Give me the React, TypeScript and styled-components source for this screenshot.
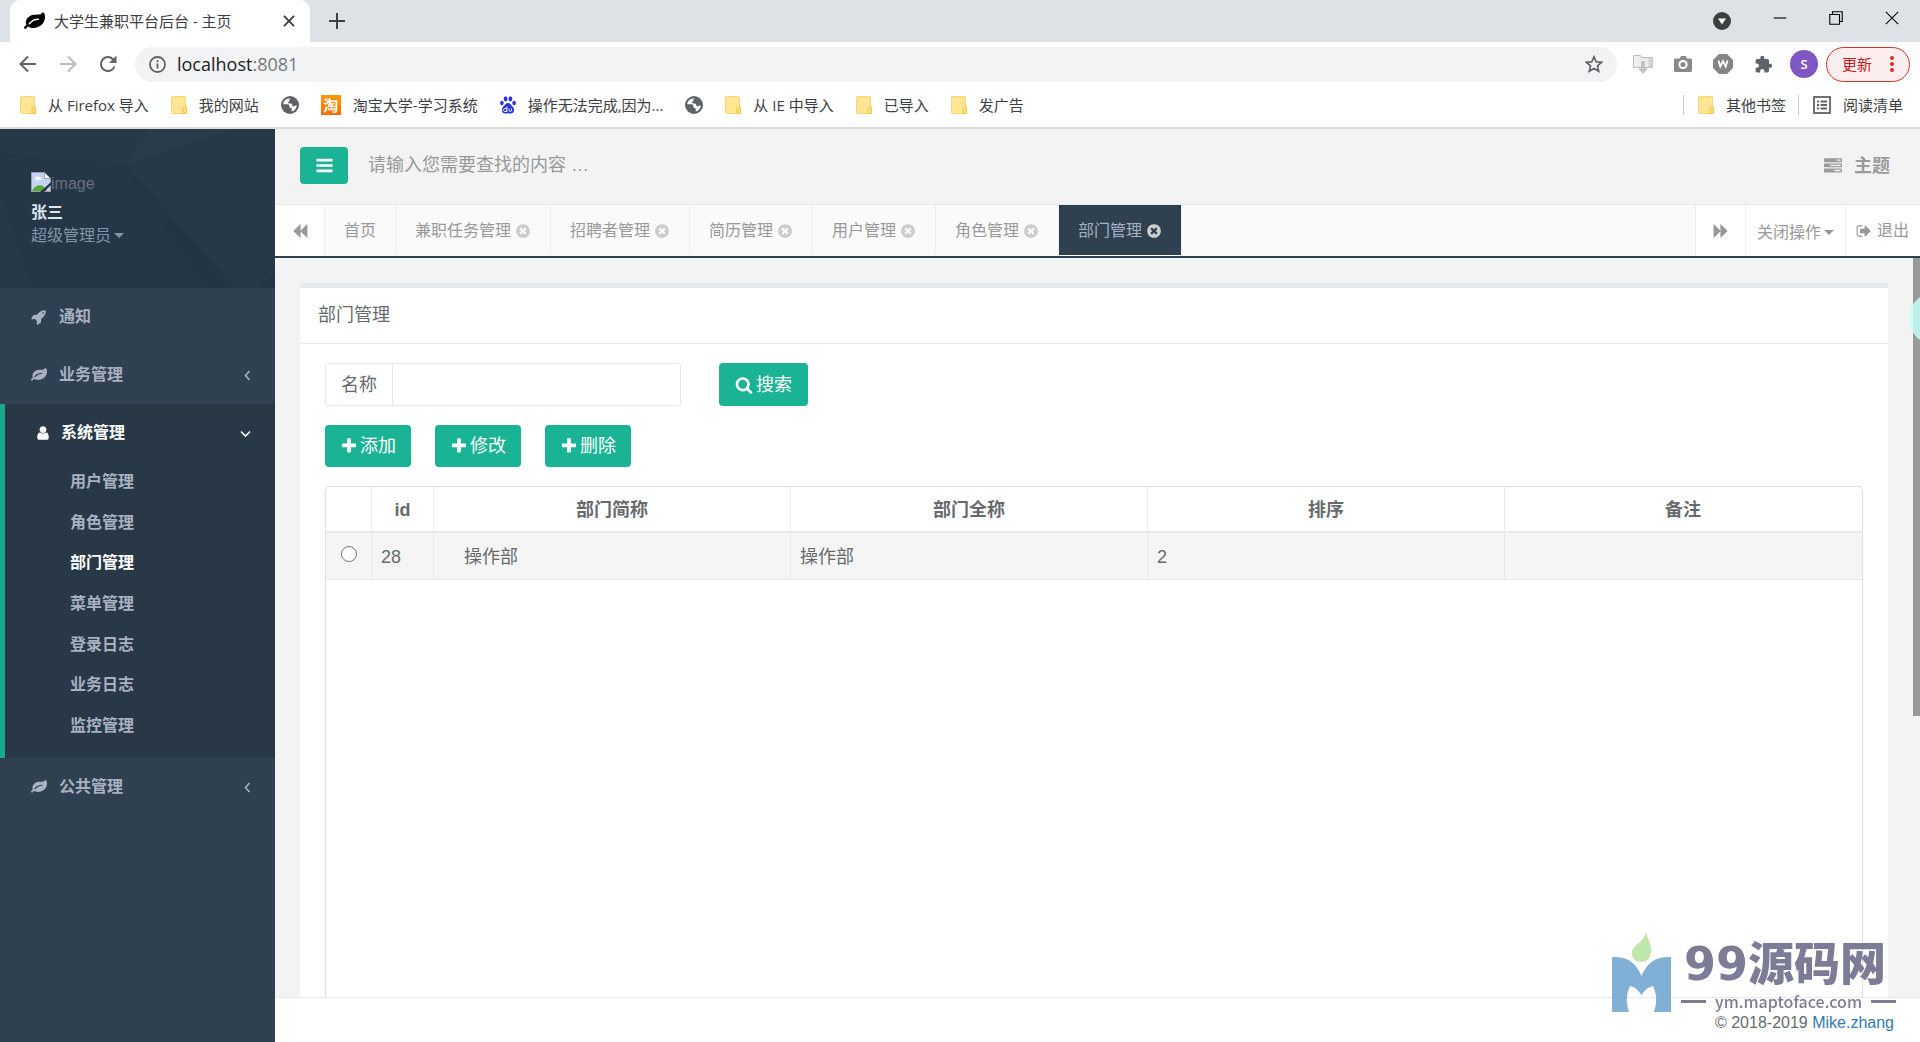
import React from "react";
import styled, { createGlobalStyle, css } from "styled-components";

const UI = `"Liberation Sans", "Noto Sans CJK SC", sans-serif`;
const CHROME = `"Open Sans", "Noto Sans CJK SC", sans-serif`;

const GlobalStyle = createGlobalStyle`
  *, *::before, *::after { box-sizing: border-box; }
  body { margin: 0; font-family: ${UI}; font-size: 18px; line-height: 24px; color: #676a6c; background: #f3f3f4; }
  button, input { font: inherit; color: inherit; margin: 0; }
  button { cursor: pointer; }
  a { text-decoration: none; color: inherit; }
  ul { list-style: none; margin: 0; padding: 0; }
  svg { display: block; flex: none; }
`;

/* ---------- icons ---------- */

const paths = {
  leaf: "M1280 704q0-26-19-45t-45-19q-172 0-318 49.5t-259.5 134-235.5 219.5q-19 21-19 45 0 26 19 45t45 19q24 0 45-19 27-24 74-71t67-66q137-124 268.5-176t313.5-52q26 0 45-19t19-45zm512-198q0 95-20 193-46 224-184.5 383t-357.5 268q-214 108-438 108-148 0-286-47-15-5-88-42t-96-37q-16 0-39.5 32t-45 70-52.5 70-60 32q-43 0-63.5-17.5t-45.5-59.5q-2-4-6-11t-5.5-10-3-9.5-1.5-13.5q0-35 31-73.5t68-65.5 68-56 31-48q0-4-14-38t-16-44q-9-51-9-104 0-115 43.5-220t119-184.5 170.5-139 204-95.5q55-18 145-25.5t179.5-9 178.5-6 163.5-24 113.5-56.5l29.5-29.5 29.5-28 27-20 36.5-16 43.5-4.5q39 0 70.5 46t47.5 112 24 124 8 96z",
  rocket: "M1440 448q0-40-28-68t-68-28-68 28-28 68 28 68 68 28 68-28 28-68zm224-288q0 249-75.5 430.5t-253.5 360.5q-81 80-195 176l-20 379q-2 16-16 26l-384 224q-7 4-16 4-12 0-23-9l-64-64q-13-14-8-32l85-276-281-281-276 85q-3 1-9 1-14 0-23-9l-64-64q-17-19-5-39l224-384q10-14 26-16l379-20q96-114 176-195 188-187 358-258t431-71q14 0 24 9.5t10 22.5z",
  user: "M1536 1399q0 109-62.5 187t-150.5 78h-854q-88 0-150.5-78t-62.5-187q0-85 8.5-160.5t31.5-152 58.5-131 94-89 134.5-34.5q131 128 313 128t313-128q76 0 134.5 34.5t94 89 58.5 131 31.5 152 8.5 160.5zm-256-887q0 159-112.5 271.5t-271.5 112.5-271.5-112.5-112.5-271.5 112.5-271.5 271.5-112.5 271.5 112.5 112.5 271.5z",
  bars: "M1664 1344v128q0 26-19 45t-45 19h-1408q-26 0-45-19t-19-45v-128q0-26 19-45t45-19h1408q26 0 45 19t19 45zm0-512v128q0 26-19 45t-45 19h-1408q-26 0-45-19t-19-45v-128q0-26 19-45t45-19h1408q26 0 45 19t19 45zm0-512v128q0 26-19 45t-45 19h-1408q-26 0-45-19t-19-45v-128q0-26 19-45t45-19h1408q26 0 45 19t19 45z",
  backward: "M1683 141q19-19 32-13t13 32v1472q0 26-13 32t-32-13l-710-710q-9-9-13-19v710q0 26-13 32t-32-13l-710-710q-19-19-19-45t19-45l710-710q19-19 32-13t13 32v710q4-10 13-19z",
  timesCircle: "M1277 1122q0-26-19-45l-181-181 181-181q19-19 19-45 0-27-19-46l-90-90q-19-19-46-19-26 0-45 19l-181 181-181-181q-19-19-45-19-27 0-46 19l-90 90q-19 19-19 46 0 26 19 45l181 181-181 181q-19 19-19 45 0 27 19 46l90 90q19 19 46 19 26 0 45-19l181-181 181 181q19 19 45 19 27 0 46-19l90-90q19-19 19-46zm387-226q0 209-103 385.5t-279.5 279.5-385.5 103-385.5-103-279.5-279.5-103-385.5 103-385.5 279.5-279.5 385.5-103 385.5 103 279.5 279.5 103 385.5z",
  search: "M1216 832q0-185-131.5-316.5t-316.5-131.5-316.5 131.5-131.5 316.5 131.5 316.5 316.5 131.5 316.5-131.5 131.5-316.5zm512 832q0 52-38 90t-90 38q-54 0-90-38l-343-342q-179 124-399 124-143 0-273.5-55.5t-225-150-150-225-55.5-273.5 55.5-273.5 150-225 225-150 273.5-55.5 273.5 55.5 225 150 150 225 55.5 273.5q0 220-124 399l343 343q37 37 37 90z",
  plus: "M1600 736v192q0 40-28 68t-68 28h-416v416q0 40-28 68t-68 28h-192q-40 0-68-28t-28-68v-416h-416q-40 0-68-28t-28-68v-192q0-40 28-68t68-28h416v-416q0-40 28-68t68-28h192q40 0 68 28t28 68v416h416q40 0 68 28t28 68z",
  signOut: "M704 1440q0 4 1 20t.5 26.5-3 23.5-10 19.5-20.5 6.5h-320q-119 0-203.5-84.5t-84.5-203.5v-704q0-119 84.5-203.5t203.5-84.5h320q13 0 22.5 9.5t9.5 22.5q0 4 1 20t.5 26.5-3 23.5-10 19.5-20.5 6.5h-320q-66 0-113 47t-47 113v704q0 66 47 113t113 47h312l11.5 1 11.5 3 8 5.5 7 9 2 13.5zm928-544q0 26-19 45l-544 544q-19 19-45 19t-45-19-19-45v-288h-448q-26 0-45-19t-19-45v-384q0-26 19-45t45-19h448v-288q0-26 19-45t45-19 45 19l544 544q19 19 19 45z",
  tasks: "M1024 1408h640v-128h-640v128zm-384-512h1024v-128h-1024v128zm640-512h384v-128h-384v128zm512 832v256q0 26-19 45t-45 19h-1664q-26 0-45-19t-19-45v-256q0-26 19-45t45-19h1664q26 0 45 19t19 45zm0-512v256q0 26-19 45t-45 19h-1664q-26 0-45-19t-19-45v-256q0-26 19-45t45-19h1664q26 0 45 19t19 45zm0-512v256q0 26-19 45t-45 19h-1664q-26 0-45-19t-19-45v-256q0-26 19-45t45-19h1664q26 0 45 19t19 45z",
};

function Fa({ name, size = 16, flip }: { name: keyof typeof paths; size?: number; flip?: boolean }) {
  return (
    <svg width={size} height={size} viewBox="0 0 1792 1792" fill="currentColor" aria-hidden="true">
      <path d={paths[name]} transform={flip ? "translate(1792 0) scale(-1 1)" : undefined} />
    </svg>
  );
}

const Folder = () => (
  <svg width="16" height="18" viewBox="0 0 16 18" aria-hidden="true">
    <rect x="0.5" y="0.5" width="14" height="17" rx="1" fill="#ffe594" stroke="#f6d774" />
    <path d="M12 17.5v-5l1-1.5h2.5v6.5z" fill="#ffe07a" stroke="#efc54a" />
  </svg>
);

const Globe = () => (
  <svg width="18" height="18" viewBox="0 0 18 18" aria-hidden="true">
    <circle cx="9" cy="9" r="9" fill="#5f6368" />
    <path d="M10 2.2c-1.200.5-2 1-1.700 2.200.300 1.200-1.300 1.200-1.500 2.200-.100.900 1.400.900 2.800.900 1.300 0 1.700.900 1.700 1.800s1.300 1.300 2.400.7c1-.5 1.600-.5 2.100-.4-.3 3-2.200 5.200-4.900 6-.5-.8.200-1.600-.1-2.600-.4-1-2-.8-2.400-1.900-.4-1.300.4-2.100-.8-2.600-1.300-.5-3.100-.1-5.400-.2C2.400 5 5.600 2 10 2.200z" fill="#fff" />
  </svg>
);

const Taobao = styled.span`
  width: 20px; height: 20px; background: linear-gradient(#ff9a00, #ff6a00); color: #fff;
  font-size: 15px; line-height: 20px; font-weight: 700; text-align: center;
`;

const Paw = () => (
  <svg width="16" height="18" viewBox="0 0 16 18" fill="#2932e1" aria-hidden="true">
    <ellipse cx="5.600" cy="2.800" rx="1.900" ry="2.600" />
    <ellipse cx="10.400" cy="2.800" rx="1.900" ry="2.600" />
    <ellipse cx="1.900" cy="7" rx="1.800" ry="2.300" />
    <ellipse cx="14.100" cy="7" rx="1.800" ry="2.300" />
    <path d="M8 7c2.200 0 3 2.200 4.700 3.800 2.300 2.200 1.600 6.700-1.700 6.700-1.200 0-2-.3-3-.3s-1.800.3-3 .3c-3.300 0-4-4.500-1.700-6.700C5 9.200 5.800 7 8 7z" />
    <path d="M6.800 10.500v5H5c-2 0-2-3 0-3h1.500M9 12.500v2.200c0 1 2.500 1 2.500 0v-2.200" fill="none" stroke="#fff" />
  </svg>
);

const Line = ({ d, size = 18, w = 2 }: { d: string; size?: number; w?: number }) => (
  <svg width={size} height={size} viewBox="0 0 18 18" fill="none" stroke="currentColor" strokeWidth={w} aria-hidden="true">
    <path d={d} />
  </svg>
);

/* ---------- browser frame ---------- */

const Page = styled.div`display: flex; flex-direction: column; height: 100vh; overflow: hidden;`;

const Chrome = styled.header`
  flex: none; font-family: ${CHROME}; font-size: 15px; line-height: 20px; color: #3c4043;
  background: #fff; border-bottom: 2px solid #dadce0;
`;
const TabStrip = styled.div`
  display: flex; height: 42px; padding-left: 10px; background: #dee1e6;
`;
const BrowserTab = styled.div`
  display: flex; align-items: center; gap: 9px; width: 300px; padding: 0 14px; background: #fff;
  border-radius: 10px 10px 0 0; color: #000;
  > span { flex: 1; color: #3c4043; }
`;
const BareButton = styled.button`
  display: inline-flex; align-items: center; justify-content: center; padding: 0; border: 0; background: none; color: #3c4043;
`;
const NewTab = styled(BareButton)`width: 18px; margin-left: 18px;`;
const WindowControls = styled.div`
  display: flex; align-items: center; gap: 42px; margin-left: auto; padding-right: 21px;
  button { height: 36px; align-self: flex-start; color: #000; }
  button:first-child { height: 42px; }
`;
const Toolbar = styled.div`
  display: flex; align-items: center; height: 44px; padding: 0 10px 0 19px; color: #5f6368;
  button { color: #5f6368; }
`;
const NavButtons = styled.div`display: flex; gap: 22px; margin-right: 18px;`;
const AddressBar = styled.div`
  flex: 1; display: flex; align-items: center; gap: 11px; height: 35px; padding: 0 14px; border-radius: 18px; background: #f1f3f4;
`;
const Url = styled.span`
  flex: 1; font-size: 18px; color: #202124;
  > span { color: #757a80; }
`;
const Extensions = styled.div`display: flex; align-items: center; gap: 21px; margin: 0 17px 0 16px;`;
const Avatar = styled.button`
  width: 28px; height: 28px; padding: 0; margin-right: 8px; border: 0; border-radius: 50%;
  && { background: #7e57c2; color: #fff; }
  font-size: 13px; font-weight: 600; line-height: 28px;
`;
const UpdateButton = styled.button`
  display: flex; align-items: center; justify-content: space-between; width: 84px; height: 35px; padding: 0 15px;
  border: 1px solid #d93025; border-radius: 18px; background: #fceeee;
  && { color: #c5221f; }
`;
const Bookmarks = styled.nav`
  display: flex; align-items: center; gap: 22px; height: 41px; padding: 0 17px 3px 20px;
`;
const Bookmark = styled.a`display: inline-flex; align-items: center; gap: 12px; white-space: nowrap;`;
const BookmarkEnd = styled.div`
  display: flex; align-items: center; gap: 12px; margin-left: auto;
  > a { border-left: 1px solid #c8cacd; padding-left: 14px; }
`;

function BrowserFrame() {
  return (
    <Chrome>
      <TabStrip>
        <BrowserTab>
          <Fa name="leaf" size={21} />
          <span>大学生兼职平台后台 - 主页</span>
          <BareButton aria-label="关闭标签页"><Line size={14} d="M2.500 2.500l13 13M15.500 2.500l-13 13" w={2.400} /></BareButton>
        </BrowserTab>
        <NewTab aria-label="新标签页"><Line d="M9 1v16M1 9h16" /></NewTab>
        <WindowControls>
          <BareButton aria-label="搜索标签页">
            <svg width="18" height="18" viewBox="0 0 18 18"><circle cx="9" cy="9" r="9" fill="#3c4043" /><path d="M5 6.500h8L9 12.500z" fill="#fff" /></svg>
          </BareButton>
          <BareButton aria-label="最小化"><Line size={14} d="M1 9h16" w={1.400} /></BareButton>
          <BareButton aria-label="还原"><Line size={14} d="M1 4.500h12.500V17H1zM4.500 4V1H17v12.500h-3.500" w={1.400} /></BareButton>
          <BareButton aria-label="关闭"><Line size={14} d="M1 1l16 16M17 1L1 17" w={1.300} /></BareButton>
        </WindowControls>
      </TabStrip>
      <Toolbar>
        <NavButtons>
          <BareButton aria-label="后退"><Line d="M17 9H2M9 1.500L1.500 9 9 16.500" /></BareButton>
          <BareButton aria-label="前进"><svg width="18" height="18" viewBox="0 0 18 18" fill="none" stroke="#babcbe" strokeWidth="2"><path d="M1 9h15M9 1.500L16.500 9 9 16.500" /></svg></BareButton>
          <BareButton aria-label="重新加载">
            <svg width="18" height="18" viewBox="0 0 18 18" fill="none" stroke="currentColor" strokeWidth="2"><path d="M15.500 11.500A7 7 0 1 1 14 4.200l1.500 1.600" /><path d="M17.500 0.500v7.500H10z" fill="currentColor" stroke="none" /></svg>
          </BareButton>
        </NavButtons>
        <AddressBar>
          <svg width="17" height="17" viewBox="0 0 17 17" fill="none" stroke="currentColor" strokeWidth="1.800"><circle cx="8.500" cy="8.500" r="7.500" /><path d="M8.500 7.500v5M8.500 4.200v2" /></svg>
          <Url>localhost<span>:8081</span></Url>
          <BareButton aria-label="收藏">
            <Line d="M9 1.800l2.200 5 5.400.5-4.100 3.600 1.200 5.300L9 13.400l-4.700 2.800 1.200-5.300L1.400 7.300l5.400-.5z" w={1.700} />
          </BareButton>
        </AddressBar>
        <Extensions>
          <svg width="20" height="20" viewBox="0 0 20 20"><path d="M.5 1.500h7l1 2h11v10H.5z" fill="#eee" stroke="#bbb" /><path d="M15.500 4v9.500h4V4z" fill="#d4d4d4" /><path d="M8.700 7.500h2.600v7.500H14l-4 4.500L6 15h2.700z" fill="#c4c4c4" stroke="#aaa" strokeWidth=".6" /></svg>
          <svg width="18" height="18" viewBox="0 0 18 18"><path d="M1.500 3.500h4L7 1h5l1 2.500h3.500A1.500 1.500 0 0 1 18 5v10.500a1.500 1.500 0 0 1-1.500 1.500h-15A1.500 1.500 0 0 1 0 15.500V5a1.500 1.500 0 0 1 1.500-1.500z" fill="#8a8a8a" /><circle cx="9" cy="9.500" r="3.600" fill="none" stroke="#fff" strokeWidth="2" /></svg>
          <svg width="20" height="20" viewBox="0 0 20 20"><path d="M6 0h8l6 6v8l-6 6H6l-6-6V6z" fill="#858585" /><path d="M5.500 6.500l1.800 6L10 7l2.700 5.500 1.800-6" fill="none" stroke="#fff" strokeWidth="1.800" /></svg>
          <svg width="19" height="19" viewBox="0 0 24 24" fill="#5f6368"><path d="M20.500 11H19V7a2 2 0 0 0-2-2h-4V3.500a2.500 2.500 0 0 0-5 0V5H4a2 2 0 0 0-2 2v3.800h1.500a2.700 2.700 0 0 1 0 5.400H2V20a2 2 0 0 0 2 2h3.800v-1.500a2.700 2.700 0 0 1 5.400 0V22H17a2 2 0 0 0 2-2v-4h1.500a2.500 2.500 0 0 0 0-5z" /></svg>
        </Extensions>
        <Avatar>S</Avatar>
        <UpdateButton>
          更新
          <svg width="4" height="16" viewBox="0 0 4 16" fill="#d93025"><circle cx="2" cy="2" r="2" /><circle cx="2" cy="8" r="2" /><circle cx="2" cy="14" r="2" /></svg>
        </UpdateButton>
      </Toolbar>
      <Bookmarks>
        <Bookmark href="#"><Folder />从 Firefox 导入</Bookmark>
        <Bookmark href="#"><Folder />我的网站</Bookmark>
        <Bookmark href="#" aria-label="书签"><Globe /></Bookmark>
        <Bookmark href="#"><Taobao>淘</Taobao>淘宝大学-学习系统</Bookmark>
        <Bookmark href="#"><Paw />操作无法完成,因为...</Bookmark>
        <Bookmark href="#" aria-label="书签"><Globe /></Bookmark>
        <Bookmark href="#"><Folder />从 IE 中导入</Bookmark>
        <Bookmark href="#"><Folder />已导入</Bookmark>
        <Bookmark href="#"><Folder />发广告</Bookmark>
        <BookmarkEnd>
          <Bookmark href="#"><Folder />其他书签</Bookmark>
          <Bookmark href="#">
            <svg width="18" height="18" viewBox="0 0 18 18" fill="none" stroke="#5f6368" strokeWidth="1.800"><rect x="1" y="1" width="16" height="16" /><path d="M4 5.500h2M7.500 5.500H14M4 9h2M7.500 9H14M4 12.500h2M7.500 12.500H14" /></svg>
            阅读清单
          </Bookmark>
        </BookmarkEnd>
      </Bookmarks>
    </Chrome>
  );
}

/* ---------- sidebar ---------- */

const Body = styled.div`flex: 1; display: flex; min-height: 0;`;
const Sidebar = styled.aside`
  flex: none; width: 275px; background: #2f4050; color: #a7b1c2; font-size: 16px; overflow: hidden;
`;
const Profile = styled.div`
  position: relative; height: 159px; padding: 43px 31px 0; background: #243747; overflow: hidden;
`;
const Facets = styled.svg`position: absolute; inset: 0;`;
const ProfileText = styled.div`position: relative; display: flex; flex-direction: column; align-items: flex-start;`;
const BrokenImage = styled.span`display: flex; height: 29px; color: #66717b;`;
const UserName = styled.strong`color: #dfe4ed; line-height: 23px; font-weight: 700;`;
const Role = styled(BareButton)`color: #8095a8; line-height: 23px; gap: 3px;`;
const Caret = styled.span`
  width: 0; height: 0; border: 5px solid transparent; border-top-color: currentColor; border-bottom: 0;
`;
const MenuLink = styled.a`
  display: flex; align-items: center; height: 58px; padding: 0 22px 0 31px; gap: 12px; font-weight: 700;
  > svg:last-child:not(:first-child) { margin-left: auto; }
`;
const MenuGroup = styled.li<{ $open?: boolean }>`
  ${p => p.$open && css`
    background: #293846; border-left: 5px solid #19aa8d; color: #fff;
    ${MenuLink} { padding-left: 30px; padding-right: 24px; gap: 10px; }
  `}
`;
const SubMenu = styled.ul`display: flex; flex-direction: column; height: 296px; padding-bottom: 12px;`;
const SubItem = styled.li<{ $active?: boolean }>`
  flex: 1; display: flex; align-items: center; padding-left: 65px; font-weight: 700; color: ${p => (p.$active ? "#fff" : "#a7b1c2")};
`;

const Angle = ({ open }: { open?: boolean }) => (
  <svg width="11" height="11" viewBox="0 0 11 11" fill="none" stroke="currentColor" strokeWidth="1.600" aria-hidden="true">
    <path d={open ? "M1 3.500l4.500 4.500L10 3.500" : "M7.500 1L3.500 5.500l4 4.500"} />
  </svg>
);

const subItems = ["用户管理", "角色管理", "部门管理", "菜单管理", "登录日志", "业务日志", "监控管理"];

function SideNav() {
  return (
    <Sidebar>
      <Profile>
        <Facets width="275" height="159" viewBox="0 0 275 159" aria-hidden="true">
          <path d="M0 0h275v145l-22 14h-18L125 36 0 24z" fill="#263949" />
          <path d="M150 0h80l-20 8-85 28z" fill="#293c4c" />
          <path d="M125 36l80 123h30z" fill="#233545" />
          <path d="M0 60l35 99H0z" fill="#253848" />
        </Facets>
        <ProfileText>
          <BrokenImage>
            <svg width="20" height="20" viewBox="0 0 20 20">
              <path d="M.5.500h13l6 6v13H.5z" fill="#c3d5f2" stroke="#9aa0a6" />
              <path d="M13.500.500v6h6z" fill="#fff" stroke="#9aa0a6" />
              <path d="M4 7a2 2 0 0 1 2-2 2 2 0 0 1 3 1h1v2H4z" fill="#fff" />
              <path d="M1 19c2-5 8-8 12-4l3 4z" fill="#55a835" />
              <path d="M9 20L20 10v3l-7 7z" fill="#243747" />
            </svg>
            image
          </BrokenImage>
          <UserName>张三</UserName>
          <Role>超级管理员<Caret /></Role>
        </ProfileText>
      </Profile>
      <ul>
        <MenuGroup><MenuLink href="#"><Fa name="rocket" />通知</MenuLink></MenuGroup>
        <MenuGroup><MenuLink href="#"><Fa name="leaf" />业务管理<Angle /></MenuLink></MenuGroup>
        <MenuGroup $open>
          <MenuLink href="#"><Fa name="user" />系统管理<Angle open /></MenuLink>
          <SubMenu>
            {subItems.map(s => <SubItem key={s} $active={s === "部门管理"}><a href="#">{s}</a></SubItem>)}
          </SubMenu>
        </MenuGroup>
        <MenuGroup><MenuLink href="#"><Fa name="leaf" />公共管理<Angle /></MenuLink></MenuGroup>
      </ul>
    </Sidebar>
  );
}

/* ---------- main area ---------- */

const Main = styled.div`flex: 1; min-width: 0; display: flex; flex-direction: column; color: #999c9e;`;
const TopBar = styled.div`
  display: flex; align-items: center; height: 76px; padding: 0 30px 2px 25px; border-bottom: 1px solid #e7eaec; background: #f3f3f4;
`;
const GreenButton = styled.button`
  display: inline-flex; align-items: center; justify-content: center; gap: 2px; border: 0; border-radius: 4px;
  padding: 0 15px; height: 42px; background: #1ab394; color: #fff;
`;
const MenuToggle = styled(GreenButton)`height: 37px; width: 48px; padding: 0;`;
const TopSearch = styled.input`
  flex: 1; height: 37px; margin-left: 20px; padding: 0; border: 0; outline: 0; background: none;
  &::placeholder { color: #999; opacity: 1; }
`;
const ThemeLink = styled.a`display: flex; align-items: center; gap: 12px; font-weight: 700;`;

const TabsBar = styled.div`
  flex: none; display: flex; height: 53px; font-size: 16px; background: #fafafa; border-bottom: 2px solid #2f4050; color: #999;
`;
const ArrowButton = styled(BareButton)<{ $end?: boolean }>`
  width: 50px; background: #fff; color: #999; border-right: 1px solid #eee;
  ${p => p.$end && css`width: 51px; border-left: 1px solid #eee; margin-left: auto;`}
`;
const PageTab = styled.a<{ $active?: boolean }>`
  display: flex; align-items: center; gap: 4px; height: 50px; padding: 2px 19px 0; border-right: 1px solid #eee; white-space: nowrap;
  svg { color: #ccc; }
  ${p => p.$active && css`background: #2f4050; color: #a7b1c2;`}
`;
const CloseMenu = styled(BareButton)`
  width: 100px; gap: 3px; padding-top: 4px; background: #fff; color: #999; border-right: 1px solid #eee;
`;
const Exit = styled.a`display: flex; align-items: center; gap: 5px; width: 74px; padding-left: 10px; background: #fff;`;

const Content = styled.main`
  position: relative; flex: 1; min-height: 0; display: flex; padding: 25px 32px 0 25px; background: #f3f3f4; color: #676a6c; overflow: hidden;
`;
const Panel = styled.section`flex: 1; display: flex; flex-direction: column; background: #fff; border-top: 5px solid #e7eaec;`;
const PanelTitle = styled.h5`
  margin: 0; padding: 15px 18px 16px; border-bottom: 1px solid #e7eaec; font-size: 18px; font-weight: 400;
`;
const PanelBody = styled.div`flex: 1; display: flex; flex-direction: column; gap: 19px; padding: 19px 25px 0;`;
const Row = styled.div<{ $gap: number }>`display: flex; gap: ${p => p.$gap}px;`;
const InputGroup = styled.div`
  display: flex; width: 356px; height: 43px; border: 1px solid #e5e6e7; border-radius: 3px;
  label { padding: 9px 15px 8px; border-right: 1px solid #e5e6e7; }
  input { flex: 1; min-width: 0; padding: 0 15px; border: 0; outline: 0; background: none; }
`;
const SearchButton = styled(GreenButton)`height: 43px; gap: 3px; padding: 0 16px;`;
const TableFrame = styled.div`flex: 1; border: 1px solid #ddd; border-bottom: 0; border-radius: 5px 5px 0 0; overflow: hidden;`;
const Table = styled.table`
  width: 100%; table-layout: fixed; border-collapse: separate; border-spacing: 0;
  th, td { padding: 2px 9px 0; border-right: 1px solid #e7eaec; text-align: left; }
  th:last-child, td:last-child { border-right-color: transparent; }
  th { height: 46px; border-bottom: 2px solid #e7eaec; text-align: center; }
  td { height: 47px; background: #f5f5f5; border-bottom: 1px solid #e7eaec; }
  input { display: block; width: 16px; height: 16px; margin: 0 auto 6px; }
`;
const Col = styled.col<{ $w?: number }>`${p => p.$w && css`width: ${p.$w}px;`}`;
const TreeCell = styled.td`&& { padding-left: 30px; }`;

const Scrollbar = styled.div`position: absolute; top: 0; right: 0; width: 7px; height: 62%; background: #999;`;
const Bubble = styled.div`
  position: absolute; top: 34px; right: -42px; width: 53px; height: 53px; border-radius: 50%; background: rgba(198, 255, 245, 0.85);
`;
const Footer = styled.footer`
  flex: none; height: 45px; padding: 13px 26px 0 0; border-top: 1px solid #e7eaec; background: #fff; color: #676a6c;
  text-align: right; font-size: 16px;
  a { color: #337ab7; }
`;

/* ---------- watermark ---------- */

const Watermark = styled.div`
  position: fixed; right: 24px; bottom: 30px; display: flex; align-items: flex-end; gap: 10px; color: #7d7c97; pointer-events: none;
`;
const WatermarkText = styled.div`display: flex; flex-direction: column; width: 215px;`;
const WatermarkName = styled.div`
  padding-left: 3px; font: 900 46px/52px "DejaVu Sans", "Noto Sans CJK SC", sans-serif; white-space: nowrap;
`;
const WatermarkSite = styled.div`
  display: flex; align-items: center; justify-content: space-between;
  font: 500 16px/22px "Noto Sans CJK SC", sans-serif;
  &::before, &::after { content: ""; width: 25px; height: 3px; background: #7d7c97; }
`;

const tabs = ["兼职任务管理", "招聘者管理", "简历管理", "用户管理", "角色管理", "部门管理"];

export default function App() {
  return (
    <Page>
      <GlobalStyle />
      <BrowserFrame />
      <Body>
        <SideNav />
        <Main>
          <TopBar>
            <MenuToggle aria-label="切换菜单"><Fa name="bars" size={19} /></MenuToggle>
            <TopSearch aria-label="搜索" placeholder="请输入您需要查找的内容 …" />
            <ThemeLink href="#"><Fa name="tasks" size={18} />主题</ThemeLink>
          </TopBar>
          <TabsBar>
            <ArrowButton aria-label="向左"><Fa name="backward" /></ArrowButton>
            <PageTab href="#">首页</PageTab>
            {tabs.map(t => (
              <PageTab key={t} href="#" $active={t === "部门管理"}>{t}<Fa name="timesCircle" size={16} /></PageTab>
            ))}
            <ArrowButton $end aria-label="向右"><Fa name="backward" flip /></ArrowButton>
            <CloseMenu>关闭操作<Caret /></CloseMenu>
            <Exit href="#"><Fa name="signOut" />退出</Exit>
          </TabsBar>
          <Content>
            <Panel>
              <PanelTitle>部门管理</PanelTitle>
              <PanelBody>
                <Row $gap={38}>
                  <InputGroup>
                    <label htmlFor="dept-name">名称</label>
                    <input id="dept-name" type="text" />
                  </InputGroup>
                  <SearchButton><Fa name="search" size={18} />搜索</SearchButton>
                </Row>
                <Row $gap={24}>
                  {["添加", "修改", "删除"].map(b => <GreenButton key={b}><Fa name="plus" size={18} />{b}</GreenButton>)}
                </Row>
                <TableFrame>
                  <Table>
                    <colgroup><Col $w={46} /><Col $w={62} /><Col /><Col /><Col /><Col /></colgroup>
                    <thead>
                      <tr><th /><th>id</th><th>部门简称</th><th>部门全称</th><th>排序</th><th>备注</th></tr>
                    </thead>
                    <tbody>
                      <tr>
                        <td><input type="radio" name="dept" aria-label="选择 28" /></td>
                        <td>28</td>
                        <TreeCell>操作部</TreeCell>
                        <td>操作部</td>
                        <td>2</td>
                        <td />
                      </tr>
                    </tbody>
                  </Table>
                </TableFrame>
              </PanelBody>
            </Panel>
            <Scrollbar />
            <Bubble />
          </Content>
          <Footer>© 2018-2019 <a href="#">Mike.zhang</a></Footer>
        </Main>
      </Body>
      <Watermark>
        <svg width="59" height="81" viewBox="0 0 59 81" aria-hidden="true">
          <path d="M34 0c1 8 5 11 5 19 0 8-4 12-10 12-6 0-9-4-9-9C20 13 33 12 34 0z" fill="#bfe6ab" />
          <path d="M0 26c14-1 24 5 29.500 19C35 31 45 25 59 26v55H42c3-9 3-18-1-26-5 1-8 4-11.500 9C26 59 23 56 18 55c-4 8-4 17-1 26H0z" fill="#6aa2cf" fillOpacity=".85" />
        </svg>
        <WatermarkText>
          <WatermarkName>99源码网</WatermarkName>
          <WatermarkSite>ym.maptoface.com</WatermarkSite>
        </WatermarkText>
      </Watermark>
    </Page>
  );
}
